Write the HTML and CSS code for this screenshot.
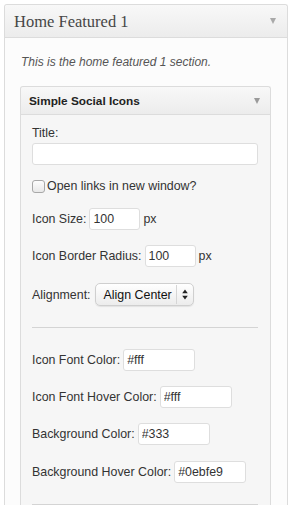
FILE: index.html
```html
<!DOCTYPE html>
<html>
<head>
<meta charset="utf-8">
<link rel="stylesheet" href="styles.css">
</head>
<body>
<div class="sidebar">
  <div class="sidebar-head">
    <h3 class="sidebar-title">Home Featured 1</h3>
    <span class="arrow arrow-outer"></span>
  </div>
  <div class="sidebar-body">
    <p class="desc">This is the home featured 1 section.</p>
    <div class="widget">
      <div class="widget-head">
        <h4 class="widget-title">Simple Social Icons</h4>
        <span class="arrow arrow-inner"></span>
      </div>
      <div class="widget-body">
        <label class="lbl">Title:</label>
        <input class="field field-wide" type="text" value="">
        <div class="row row-check">
          <input class="check" type="checkbox">
          <label class="lbl">Open links in new window?</label>
        </div>
        <div class="row r-size">
          <label class="lbl">Icon Size:</label>
          <input class="field field-num" type="text" value="100">
          <span class="lbl">px</span>
        </div>
        <div class="row r-radius">
          <label class="lbl">Icon Border Radius:</label>
          <input class="field field-num" type="text" value="100">
          <span class="lbl">px</span>
        </div>
        <div class="row r-align">
          <label class="lbl">Alignment:</label>
          <div class="select">
            <span class="select-text">Align Center</span>
            <span class="select-sep"></span>
            <svg class="select-arrows" width="6" height="11" viewBox="0 0 6 11"><path d="M3 0.5 L5.8 4.2 H0.2 Z M3 10.5 L5.8 6.8 H0.2 Z" fill="#222"/></svg>
          </div>
        </div>
        <hr class="sep">
        <div class="row r-c1">
          <label class="lbl">Icon Font Color:</label>
          <input class="field field-color" type="text" value="#fff">
        </div>
        <div class="row r-c">
          <label class="lbl">Icon Font Hover Color:</label>
          <input class="field field-color" type="text" value="#fff">
        </div>
        <div class="row r-c">
          <label class="lbl">Background Color:</label>
          <input class="field field-color" type="text" value="#333">
        </div>
        <div class="row r-c r-last">
          <label class="lbl">Background Hover Color:</label>
          <input class="field field-color" type="text" value="#0ebfe9">
        </div>
        <hr class="sep sep-bottom">
      </div>
    </div>
  </div>
</div>
</body>
</html>
```

FILE: styles.css
```css
html, body {
  margin: 0;
  padding: 0;
  background: #ffffff;
  height: 505px;
  overflow: hidden;
}
body {
  font-family: "Liberation Sans", Arial, sans-serif;
  color: #333;
}
.sidebar {
  margin: 4px 0 0 4px;
  width: 284px;
  height: 501px;
  box-sizing: border-box;
  border: 1px solid #dcdcdc;
  border-bottom: 0;
  border-radius: 3px 3px 0 0;
  background: #fcfcfc;
  display: flex;
  flex-direction: column;
}
.sidebar-head {
  height: 32px;
  flex: none;
  border-bottom: 1px solid #dcdcdc;
  background: linear-gradient(to bottom, #f8f8f8, #ececec);
  display: flex;
  align-items: center;
  padding: 0 10px 0 9px;
  border-radius: 3px 3px 0 0;
}
.sidebar-title {
  margin: 0;
  flex: 1;
  font-family: "Liberation Serif", Georgia, serif;
  font-weight: normal;
  font-size: 16.5px;
  color: #464646;
  line-height: 20px;
  padding-top: 1px;
}
.arrow {
  width: 0;
  height: 0;
  border-left: 3.5px solid transparent;
  border-right: 3.5px solid transparent;
  border-top: 6px solid #a9a9a9;
}
.arrow-outer { margin-right: 1px; }
.sidebar-body {
  flex: 1;
  min-height: 0;
  padding: 16px 16px 0 15px;
  display: flex;
  flex-direction: column;
}
.desc {
  margin: 0;
  font-size: 12px;
  font-style: italic;
  line-height: 16px;
  color: #555;
  padding-left: 1px;
}
.widget {
  margin-top: 16px;
  flex: 1;
  min-height: 0;
  border: 1px solid #dcdcdc;
  border-bottom: 0;
  border-radius: 3px 3px 0 0;
  background: #f6f6f6;
  overflow: hidden;
}
.widget-head {
  height: 27px;
  border-bottom: 1px solid #dcdcdc;
  background: linear-gradient(to bottom, #f8f8f8, #ececec);
  display: flex;
  align-items: center;
  padding: 0 10px 0 8px;
  border-radius: 3px 3px 0 0;
}
.widget-title {
  margin: 0;
  flex: 1;
  font-size: 11.8px;
  font-weight: bold;
  color: #222;
  line-height: 16px;
}
.arrow-inner {
  border-top-color: #9a9a9a;
  border-top-width: 6.5px;
}
.widget-body {
  padding: 10px 12px 0 11px;
}
.lbl {
  font-size: 12.4px;
  line-height: 16px;
  color: #333;
  display: block;
}
.field {
  display: block;
  box-sizing: border-box;
  height: 22px;
  border: 1px solid #dedede;
  border-radius: 3px;
  background: #fff;
  font-family: "Liberation Sans", Arial, sans-serif;
  font-size: 12.4px;
  color: #333;
  padding: 0 3px;
  margin: 0;
  outline: none;
}
.field-wide {
  width: 226px;
  margin-top: 2px;
}
.field-num { width: 51px; }
.field-color { width: 72px; }
.row {
  display: flex;
  align-items: center;
  gap: 3px;
  height: 22px;
}
.row-check {
  height: 16px;
  margin-top: 13px;
  gap: 2px;
}
.check {
  appearance: none;
  -webkit-appearance: none;
  margin: 0;
  width: 13px;
  height: 13px;
  box-sizing: border-box;
  border: 1px solid #a8a8a8;
  border-radius: 3px;
  background: linear-gradient(to bottom, #fdfdfd, #e8e8e8);
}
.r-size { margin-top: 14px; }
.r-radius { margin-top: 15px; }
.r-align { margin-top: 16px; height: 23px; gap: 4px; }
.select {
  box-sizing: border-box;
  width: 99px;
  height: 23px;
  display: flex;
  align-items: center;
  border: 1px solid #cfcfcf;
  border-radius: 5px;
  background: linear-gradient(to bottom, #ffffff, #ececec);
  box-shadow: 0 1px 1px rgba(0,0,0,0.08);
}
.select-text {
  font-size: 12.4px;
  color: #111;
  padding-left: 8px;
  width: 72px;
}
.select-sep {
  width: 1px;
  height: 19px;
  background: #d6d6d6;
}
.select-arrows {
  margin-left: 5px;
}
.sep {
  margin: 21px 0 0 0;
  border: 0;
  height: 1px;
  background: #d4d4d4;
  width: 226px;
}
.r-c1 { margin-top: 21px; }
.r-c { margin-top: 15px; }
.r-last { margin-top: 16px; }
.sep-bottom { margin-top: 21px; }
```
